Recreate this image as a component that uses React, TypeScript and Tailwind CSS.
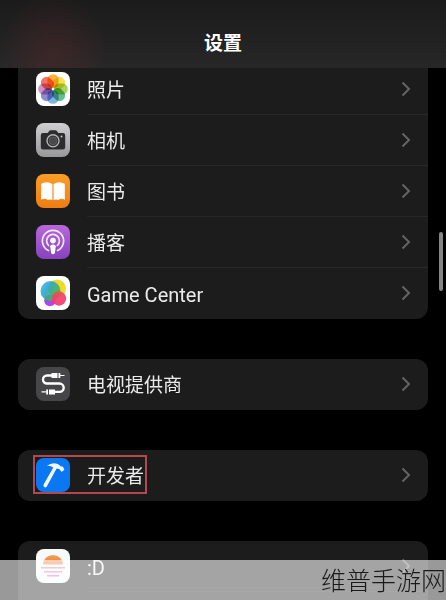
import type { ReactNode } from 'react'

const petals = ['#fba31c', '#f3dc2c', '#9ccc45', '#4bb37c', '#6ba6de', '#7d78c6', '#c481bd', '#f25a48']

function PhotosIcon() {
  return (
    <svg viewBox="0 0 34 34" className="size-full">
      <rect width="34" height="34" fill="#fff" />
      {petals.map((color, i) => (
        <rect
          key={color}
          x="11.4"
          y="2.2"
          width="11.2"
          height="13.8"
          rx="5.4"
          fill={color}
          className="mix-blend-multiply"
          opacity="0.85"
          transform={`rotate(${i * 45} 17 17)`}
        />
      ))}
      <circle cx="17" cy="17" r="1.2" fill="#fff" />
    </svg>
  )
}

function CameraIcon() {
  return (
    <svg viewBox="0 0 34 34" className="size-full">
      <defs>
        <linearGradient id="camera-bg" x1="0" y1="0" x2="0" y2="1">
          <stop offset="0" stopColor="#cfcfd1" />
          <stop offset="1" stopColor="#98989b" />
        </linearGradient>
      </defs>
      <rect width="34" height="34" fill="url(#camera-bg)" />
      <path
        d="M7.5 10h4.200l1.500-2.100q.5-.7 1.400-.7h4.800q.9 0 1.400.7l1.500 2.100h4.700q2.200 0 2.200 2.200v12q0 2.200-2.200 2.200h-20q-2.200 0-2.200-2.200v-12q0-2.200 2.200-2.200z"
        fill="#2c2c2e"
      />
      <circle cx="17" cy="17.8" r="6" fill="none" stroke="#b2b2b4" strokeWidth="1.4" />
      <circle cx="17" cy="17.8" r="3.9" fill="#48484a" stroke="#6f6f71" strokeWidth="0.6" />
      <circle cx="25.5" cy="13.5" r="1" fill="#c5c5c7" />
    </svg>
  )
}

function BooksIcon() {
  return (
    <svg viewBox="0 0 34 34" className="size-full">
      <defs>
        <linearGradient id="books-bg" x1="0" y1="0" x2="0" y2="1">
          <stop offset="0" stopColor="#fb9e27" />
          <stop offset="1" stopColor="#ee7d14" />
        </linearGradient>
      </defs>
      <rect width="34" height="34" fill="url(#books-bg)" />
      <path d="M16.4 10Q11 6.500 5.200 9.700V26q1.400-1.200 3.200-1.200T11.600 26q2.400-1.200 4.800 0z" fill="#fff" />
      <path d="M17.6 10Q23 6.500 28.800 9.700V26q-1.400-1.200-3.200-1.200T22.400 26q-2.400-1.200-4.800 0z" fill="#fff" />
    </svg>
  )
}

function PodcastsIcon() {
  return (
    <svg viewBox="0 0 34 34" className="size-full">
      <defs>
        <linearGradient id="podcasts-bg" x1="0" y1="0" x2="0" y2="1">
          <stop offset="0" stopColor="#b968dc" />
          <stop offset="1" stopColor="#8742bd" />
        </linearGradient>
      </defs>
      <rect width="34" height="34" fill="url(#podcasts-bg)" />
      <g fill="none" stroke="#f5eafa" strokeWidth="1.7" strokeLinecap="round">
        <path d="M12.500 25.500a10.600 10.600 0 1 1 9 0" />
        <path d="M12.600 20.500a6.400 6.400 0 1 1 8.800 0" />
      </g>
      <circle cx="17" cy="15.6" r="2.8" fill="#fff" />
      <path d="M14.200 21.300q0-1.800 2.800-1.800t2.800 1.800l-.8 6.200q-.3 1.700-2 1.700t-2-1.700z" fill="#fff" />
    </svg>
  )
}

function GameCenterIcon() {
  return (
    <svg viewBox="0 0 34 34" className="size-full">
      <defs>
        <linearGradient id="gc-yellow" x1="1" y1="0" x2="0" y2="1">
          <stop offset="0" stopColor="#ffd51c" />
          <stop offset="0.5" stopColor="#e9dc35" />
          <stop offset="1" stopColor="#57c84d" />
        </linearGradient>
        <linearGradient id="gc-blue" x1="0" y1="0" x2="1" y2="0.8">
          <stop offset="0" stopColor="#36c5ef" />
          <stop offset="0.4" stopColor="#2da3cf" />
          <stop offset="0.75" stopColor="#3fb659" />
          <stop offset="1" stopColor="#7a9a60" />
        </linearGradient>
        <linearGradient id="gc-purple" x1="0" y1="0" x2="1" y2="1">
          <stop offset="0" stopColor="#6a5cf0" />
          <stop offset="1" stopColor="#d53be0" />
        </linearGradient>
        <linearGradient id="gc-pink" x1="0" y1="0" x2="0" y2="1">
          <stop offset="0" stopColor="#e8505a" />
          <stop offset="1" stopColor="#fb3278" />
        </linearGradient>
      </defs>
      <rect width="34" height="34" fill="#fff" />
      <circle cx="21" cy="12.5" r="9" fill="url(#gc-yellow)" />
      <circle cx="14" cy="24.5" r="5.8" fill="url(#gc-purple)" />
      <circle cx="14.5" cy="15" r="10" fill="url(#gc-blue)" opacity="0.9" />
      <circle cx="23" cy="22.5" r="7.2" fill="url(#gc-pink)" opacity="0.92" />
    </svg>
  )
}

function TvProviderIcon() {
  return (
    <svg viewBox="0 0 34 34" className="size-full">
      <rect width="34" height="34" fill="#464648" />
      <path
        d="M16 8.500h-5a4 4 0 0 0 0 8h12.500a4.200 4.200 0 0 1 0 8.400H19"
        fill="none"
        stroke="#fff"
        strokeWidth="2.4"
      />
      <path d="M15.500 6h6v5h-6zM22.500 6h1.800v5h-1.800zM13 22.400h6v5h-6zM10.200 22.400H12v5h-1.800z" fill="#fff" />
      <path d="M24 8.500h4.500M5.500 24.900H10" stroke="#fff" strokeWidth="1.200" />
    </svg>
  )
}

function DeveloperIcon() {
  return (
    <svg viewBox="0 0 34 34" className="size-full">
      <rect width="34" height="34" fill="#0a78f2" />
      <path
        d="M11 7.800Q16.500 3.600 22.200 6.300q1.600.8 2.600 2.200l2-.1 1.600 3.300-2.800 2.300-2-2.800-3-.6L10.800 28.600Q9.600 30 8.300 29.100T7.600 26.600L17.300 9.600Q14.500 7.300 11 7.800z"
        fill="#f2f7fd"
      />
    </svg>
  )
}

function SunsetIcon() {
  return (
    <svg viewBox="0 0 34 34" className="size-full">
      <defs>
        <linearGradient id="sunset" x1="0" y1="6" x2="0" y2="28" gradientUnits="userSpaceOnUse">
          <stop offset="0" stopColor="#f3a254" />
          <stop offset="0.4" stopColor="#ee7c3c" />
          <stop offset="0.6" stopColor="#e9779a" />
          <stop offset="1" stopColor="#d45fd4" />
        </linearGradient>
      </defs>
      <rect width="34" height="34" fill="#f8fafa" />
      <path d="M7 15.500a10 9.500 0 0 1 20 0z" fill="url(#sunset)" />
      <path d="M5 18h24v1.500H5zM8 22h18v1.500H8zM11 26h12v1.500H11z" fill="url(#sunset)" />
    </svg>
  )
}

type Item = { label: string; icon: ReactNode; latin?: boolean; highlighted?: boolean }

const groups: Item[][] = [
  [
    { label: '照片', icon: <PhotosIcon /> },
    { label: '相机', icon: <CameraIcon /> },
    { label: '图书', icon: <BooksIcon /> },
    { label: '播客', icon: <PodcastsIcon /> },
    { label: 'Game Center', icon: <GameCenterIcon />, latin: true },
  ],
  [{ label: '电视提供商', icon: <TvProviderIcon /> }],
  [{ label: '开发者', icon: <DeveloperIcon />, highlighted: true }],
  [{ label: ':D', icon: <SunsetIcon />, latin: true }],
]

function Row({ label, icon, latin, highlighted }: Item) {
  return (
    <button type="button" className="flex h-[51px] w-full items-center pb-0.5 pl-[18px] text-left">
      <span className="relative flex h-full items-center gap-[17px]">
        <span className="size-[34px] shrink-0 overflow-hidden rounded-lg">{icon}</span>
        <span className={`pt-1 leading-6 text-[#ebebeb] ${latin ? 'text-xl' : 'text-[19px]'}`}>{label}</span>
        {highlighted && <span className="absolute -inset-x-[3px] inset-y-[5px] border-2 border-[#b5484c]" />}
      </span>
      <svg viewBox="0 0 10 16" className="mr-[17px] ml-auto h-4 w-2.5" fill="none" stroke="#646466" strokeWidth="2">
        <path d="M1.500 1.500L8 8l-6.500 6.500" />
      </svg>
    </button>
  )
}

export default function App() {
  return (
    <div className="relative flex h-screen flex-col overflow-hidden bg-black font-['Roboto','Noto_Sans_CJK_SC',sans-serif]">
      <header className="relative z-10 flex h-[68px] shrink-0 items-end justify-center bg-linear-to-b from-[#1b1b1b] to-[#272728] pb-2.5">
        {/* tint of the content scrolled under the bar */}
        <div className="absolute inset-0 bg-[radial-gradient(ellipse_54px_62px_at_53px_54px,#a030302e_0%,#a0303020_40%,#a0303000_100%)]" />
        <h1 className="relative text-[19px] leading-7 font-bold text-white">设置</h1>
      </header>

      <main className="-mt-1 flex flex-col gap-10 px-[18px]">
        {groups.map((items, g) => (
          <ul
            key={items[0].label}
            className={`bg-[#1c1c1d] ${g === 0 ? 'rounded-b-xl' : g === 3 ? 'rounded-t-xl pb-12' : 'rounded-xl'}`}
          >
            {items.map((item, i) => (
              <li key={item.label} className="relative">
                <Row {...item} />
                {(i < items.length - 1 || g === 3) && (
                  <span className="absolute right-0 bottom-0 left-[69px] h-px bg-[#272728]" />
                )}
              </li>
            ))}
          </ul>
        ))}
      </main>

      {/* scroll indicator */}
      <div className="absolute top-[232px] right-[3px] h-[59px] w-1 rounded-full bg-[#848484]" />

      <footer className="absolute inset-x-0 bottom-0 flex h-10 items-end justify-end overflow-hidden bg-white/60">
        <p className="text-[25px] leading-9 font-extralight whitespace-nowrap text-[#1a1a1a]">维普手游网</p>
      </footer>
    </div>
  )
}
